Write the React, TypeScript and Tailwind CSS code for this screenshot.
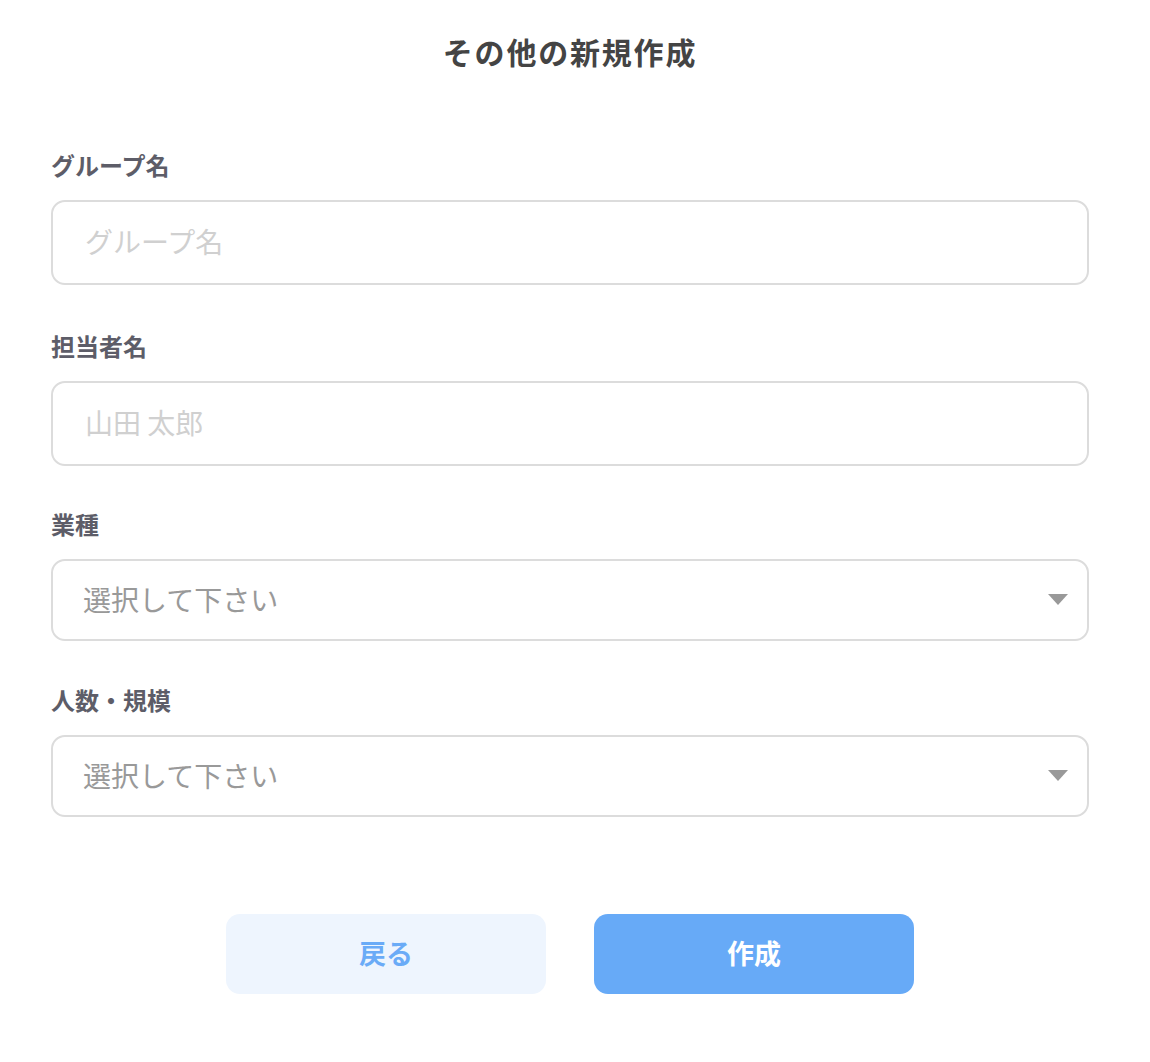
import { useState } from 'react';

const font = { fontFamily: '"Noto Sans CJK JP", "Noto Sans", sans-serif' };

function Label({ children }: { children: React.ReactNode }) {
  return <div className="text-[24px] leading-[32px] font-bold text-[#5d5d68]">{children}</div>;
}

function Select({ options }: { options: string[] }) {
  const [value, setValue] = useState('');
  return (
    <div className="relative mt-[19px]">
      <select
        value={value}
        onChange={(e) => setValue(e.target.value)}
        className="w-full h-[82px] appearance-none rounded-[14px] border-2 border-[#dcdcdc] bg-white pl-[30px] pr-[60px] pb-[3px] text-[28px] text-[#999] outline-none"
        style={font}
      >
        <option value="">選択して下さい</option>
        {options.map((o) => (
          <option key={o} value={o}>{o}</option>
        ))}
      </select>
      <svg className="pointer-events-none absolute right-[21px] top-[35px]" width="20" height="11" viewBox="0 0 20 11">
        <path d="M0 0 H20 L10 11 Z" fill="#999" />
      </svg>
    </div>
  );
}

export default function App() {
  return (
    <div className="min-h-screen bg-white" style={font}>
      <div className="ml-[51px] w-[1038px] pt-[31px]">
        <h1 className="text-center text-[30px] leading-[40px] font-bold tracking-[0.06em] text-[#444]">
          その他の新規作成
        </h1>

        <div className="mt-[78px]">
          <Label>グループ名</Label>
          <input
            placeholder="グループ名"
            className="mt-[19px] w-full h-[85px] rounded-[14px] border-2 border-[#dcdcdc] px-[32px] pb-[3px] text-[28px] text-[#444] placeholder:text-[#d0d0d0] outline-none"
          />
        </div>

        <div className="mt-[45px]">
          <Label>担当者名</Label>
          <input
            placeholder="山田 太郎"
            className="mt-[19px] w-full h-[85px] rounded-[14px] border-2 border-[#dcdcdc] px-[32px] pb-[3px] text-[28px] text-[#444] placeholder:text-[#d0d0d0] outline-none"
          />
        </div>

        <div className="mt-[42px]">
          <Label>業種</Label>
          <Select options={['IT・通信', '製造', '小売', 'サービス']} />
        </div>

        <div className="mt-[43px]">
          <Label>人数・規模</Label>
          <Select options={['1〜10人', '11〜50人', '51〜100人', '101人以上']} />
        </div>

        <div className="mt-[97px] flex justify-center gap-[48px] pb-[60px]">
          <button className="w-[320px] h-[80px] rounded-[14px] bg-[#eef5fe] pb-[2px] text-[27px] font-bold text-[#6aabf7]">
            戻る
          </button>
          <button className="w-[320px] h-[80px] rounded-[14px] bg-[#67aaf7] pb-[2px] text-[27px] font-bold text-white">
            作成
          </button>
        </div>
      </div>
    </div>
  );
}
